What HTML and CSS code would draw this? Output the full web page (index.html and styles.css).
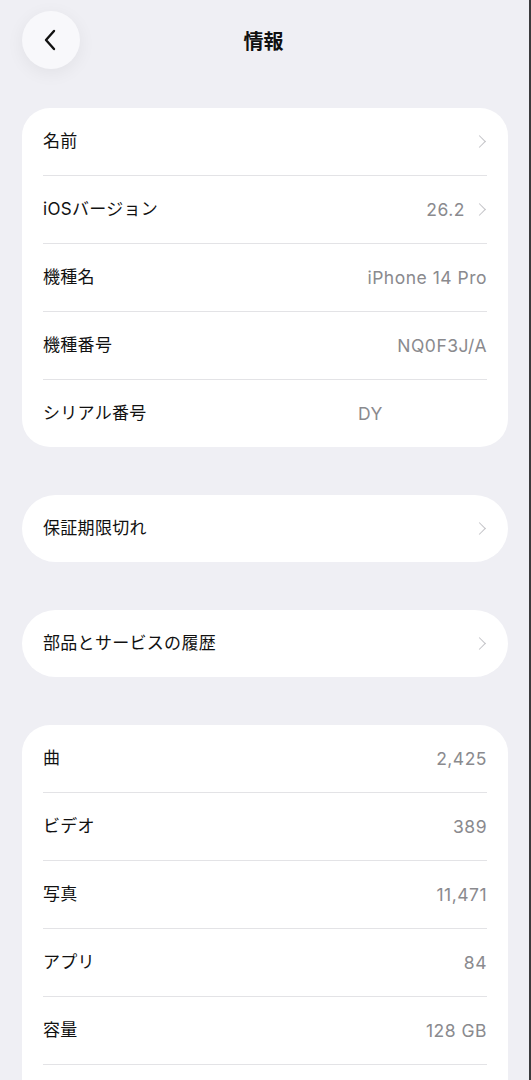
FILE: index.html
```html
<!DOCTYPE html>
<html lang="ja">
<head>
  <meta charset="UTF-8">
  <title>情報</title>
  <meta name="viewport" content="width=device-width, initial-scale=1.0">
  <link rel="stylesheet" href="styles.css">
</head>
<body>
  <header class="topbar">
    <button class="back" aria-label="戻る">
      <svg width="14" height="22" viewBox="0 0 14 22"><path d="M11 2 L3 11 L11 20" fill="none" stroke="#111" stroke-width="2.4" stroke-linecap="round" stroke-linejoin="round"/></svg>
    </button>
    <h1>情報</h1>
  </header>

  <main class="list">
    <section class="group">
      <div class="row"><span class="label">名前</span><span class="chev"></span></div>
      <div class="row"><span class="label">iOSバージョン</span><span class="value">26.2</span><span class="chev"></span></div>
      <div class="row"><span class="label">機種名</span><span class="value">iPhone 14 Pro</span></div>
      <div class="row"><span class="label">機種番号</span><span class="value">NQ0F3J/A</span></div>
      <div class="row"><span class="label">シリアル番号</span><span class="value serial">DY</span></div>
    </section>

    <section class="group pill">
      <div class="row"><span class="label">保証期限切れ</span><span class="chev"></span></div>
    </section>

    <section class="group pill">
      <div class="row"><span class="label">部品とサービスの履歴</span><span class="chev"></span></div>
    </section>

    <section class="group">
      <div class="row"><span class="label">曲</span><span class="value">2,425</span></div>
      <div class="row"><span class="label">ビデオ</span><span class="value">389</span></div>
      <div class="row"><span class="label">写真</span><span class="value">11,471</span></div>
      <div class="row"><span class="label">アプリ</span><span class="value">84</span></div>
      <div class="row"><span class="label">容量</span><span class="value">128 GB</span></div>
      <div class="row"></div>
    </section>
  </main>
</body>
</html>
```

FILE: styles.css
```css
html { background: #efeff4; }
body { margin: 0; min-height: 1080px; background: #efeff4; border-right: 2px solid #3a3a3c; font-family: Inter, "Noto Sans CJK JP", sans-serif; color: #111; }
.topbar { position: relative; height: 69px; padding-top: 11px; box-sizing: border-box; }
.back { position: absolute; left: 22px; top: 11px; width: 58px; height: 58px; border: 0; border-radius: 50%; background: #f8f8fb; box-shadow: 0 4px 18px rgba(0,0,0,0.06); display: flex; align-items: center; justify-content: center; padding: 0 2px 0 0; }
.topbar h1 { margin: 0; text-align: center; font-size: 20px; font-weight: 700; line-height: 62px; padding-right: 2px; }
.list { display: flex; flex-direction: column; gap: 48px; padding: 39px 21px 0 22px; }
.group { background: #fff; border-radius: 28px; padding: 0 21px 0 21px; }
.group.pill { border-radius: 34px; }
.row { display: flex; align-items: center; height: 67px; border-bottom: 1px solid #e3e3e6; font-size: 17px; }
.row:last-child { border-bottom: 0; }
.label { flex: 1; padding-bottom: 5px; letter-spacing: 0.3px; }
.value { color: #8a8a8e; font-size: 17.5px; letter-spacing: 0.5px; }
.value.serial { margin-right: 104px; }
.chev { width: 8px; height: 8px; border-top: 1.6px solid #c3c3c7; border-right: 1.6px solid #c3c3c7; transform: rotate(45deg); margin: 0 3px 0 10px; }
```
